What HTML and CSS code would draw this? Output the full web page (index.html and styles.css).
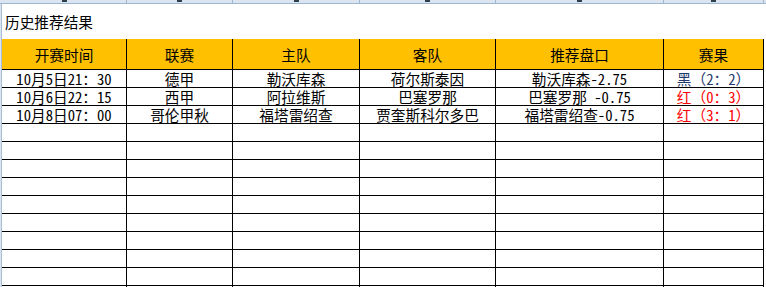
FILE: index.html
```html
<!DOCTYPE html>
<html lang="zh-CN">
<head>
<meta charset="utf-8">
<title>历史推荐结果</title>
<link rel="stylesheet" href="styles.css">
</head>
<body>
<div class="sheet">
  <div class="colhead">
    <div class="gut"></div>
    <div class="ch w0"><span class="mark"></span></div>
    <div class="ch w1"><span class="mark"></span></div>
    <div class="ch w2"><span class="mark"></span></div>
    <div class="ch w3"><span class="mark"></span></div>
    <div class="ch w4"><span class="mark"></span></div>
    <div class="ch w5"><span class="mark"></span></div>
  </div>
  <div class="body">
    <div class="rowhead"></div>
    <div class="main">
      <div class="title">历史推荐结果</div>
      <div class="grid">
        <div class="c h">开赛时间</div>
        <div class="c h">联赛</div>
        <div class="c h">主队</div>
        <div class="c h">客队</div>
        <div class="c h">推荐盘口</div>
        <div class="c h">赛果</div>

        <div class="c">10月5日21：30</div>
        <div class="c">德甲</div>
        <div class="c">勒沃库森</div>
        <div class="c">荷尔斯泰因</div>
        <div class="c">勒沃库森-2.75</div>
        <div class="c navy">黑（2：2）</div>

        <div class="c">10月6日22：15</div>
        <div class="c">西甲</div>
        <div class="c">阿拉维斯</div>
        <div class="c">巴塞罗那</div>
        <div class="c">巴塞罗那 -0.75</div>
        <div class="c red">红（0：3）</div>

        <div class="c">10月8日07：00</div>
        <div class="c">哥伦甲秋</div>
        <div class="c">福塔雷绍查</div>
        <div class="c">贾奎斯科尔多巴</div>
        <div class="c">福塔雷绍查-0.75</div>
        <div class="c red">红（3：1）</div>

        <div class="c"></div><div class="c"></div><div class="c"></div><div class="c"></div><div class="c"></div><div class="c"></div>
        <div class="c"></div><div class="c"></div><div class="c"></div><div class="c"></div><div class="c"></div><div class="c"></div>
        <div class="c"></div><div class="c"></div><div class="c"></div><div class="c"></div><div class="c"></div><div class="c"></div>
        <div class="c"></div><div class="c"></div><div class="c"></div><div class="c"></div><div class="c"></div><div class="c"></div>
        <div class="c"></div><div class="c"></div><div class="c"></div><div class="c"></div><div class="c"></div><div class="c"></div>
        <div class="c"></div><div class="c"></div><div class="c"></div><div class="c"></div><div class="c"></div><div class="c"></div>
        <div class="c"></div><div class="c"></div><div class="c"></div><div class="c"></div><div class="c"></div><div class="c"></div>
        <div class="c"></div><div class="c"></div><div class="c"></div><div class="c"></div><div class="c"></div><div class="c"></div>
        <div class="c"></div><div class="c"></div><div class="c"></div><div class="c"></div><div class="c"></div><div class="c"></div>
        <div class="c"></div><div class="c"></div><div class="c"></div><div class="c"></div><div class="c"></div><div class="c"></div>
      </div>
    </div>
  </div>
</div>
</body>
</html>
```

FILE: styles.css
```css
html, body {
  margin: 0;
  padding: 0;
  background: #ffffff;
  overflow: hidden;
}

.sheet {
  width: 766px;
  height: 287px;
  overflow: hidden;
  font-family: "Noto Sans Mono CJK SC", "Noto Sans CJK SC", "DejaVu Sans", sans-serif;
  font-size: 14.67px;
  color: #000000;
}

.colhead {
  display: flex;
  height: 3px;
  background: #dbe5f1;
  border-bottom: 1px solid #9eb6ce;
}

.gut {
  width: 2px;
  flex: none;
}

.ch {
  box-sizing: border-box;
  flex: none;
  height: 3px;
  border-right: 1px solid #9eb6ce;
  display: flex;
  justify-content: center;
  align-items: flex-start;
}

.mark {
  width: 5px;
  height: 2px;
  background: #2b3f4e;
}

.w0 { width: 125px; }
.w1 { width: 106px; }
.w2 { width: 127px; }
.w3 { width: 136px; }
.w4 { width: 168px; }
.w5 { width: 100px; }

.body {
  display: flex;
}

.rowhead {
  width: 1px;
  flex: none;
  background: #dbe5f1;
  border-right: 1px solid #a9bdd2;
  height: 283px;
}

.main {
  flex: 1;
}

.title {
  height: 35px;
  line-height: 35px;
  padding-left: 3px;
  font-family: "Noto Sans CJK SC", sans-serif;
}

.grid {
  display: grid;
  grid-template-columns: 125px 106px 127px 136px 168px 100px;
  grid-template-rows: 31px;
  grid-auto-rows: 18px;
  width: 762px;
}

.c {
  box-sizing: border-box;
  border-right: 1px solid #000000;
  border-bottom: 1px solid #000000;
  display: flex;
  align-items: center;
  justify-content: center;
  white-space: nowrap;
  line-height: 1;
  padding-top: 1px;
}

.h {
  background: #ffc000;
  padding-top: 2px;
  font-family: "Noto Sans CJK SC", sans-serif;
}

.navy { color: #1f3a6e; }
.red { color: #ff0000; }
```
